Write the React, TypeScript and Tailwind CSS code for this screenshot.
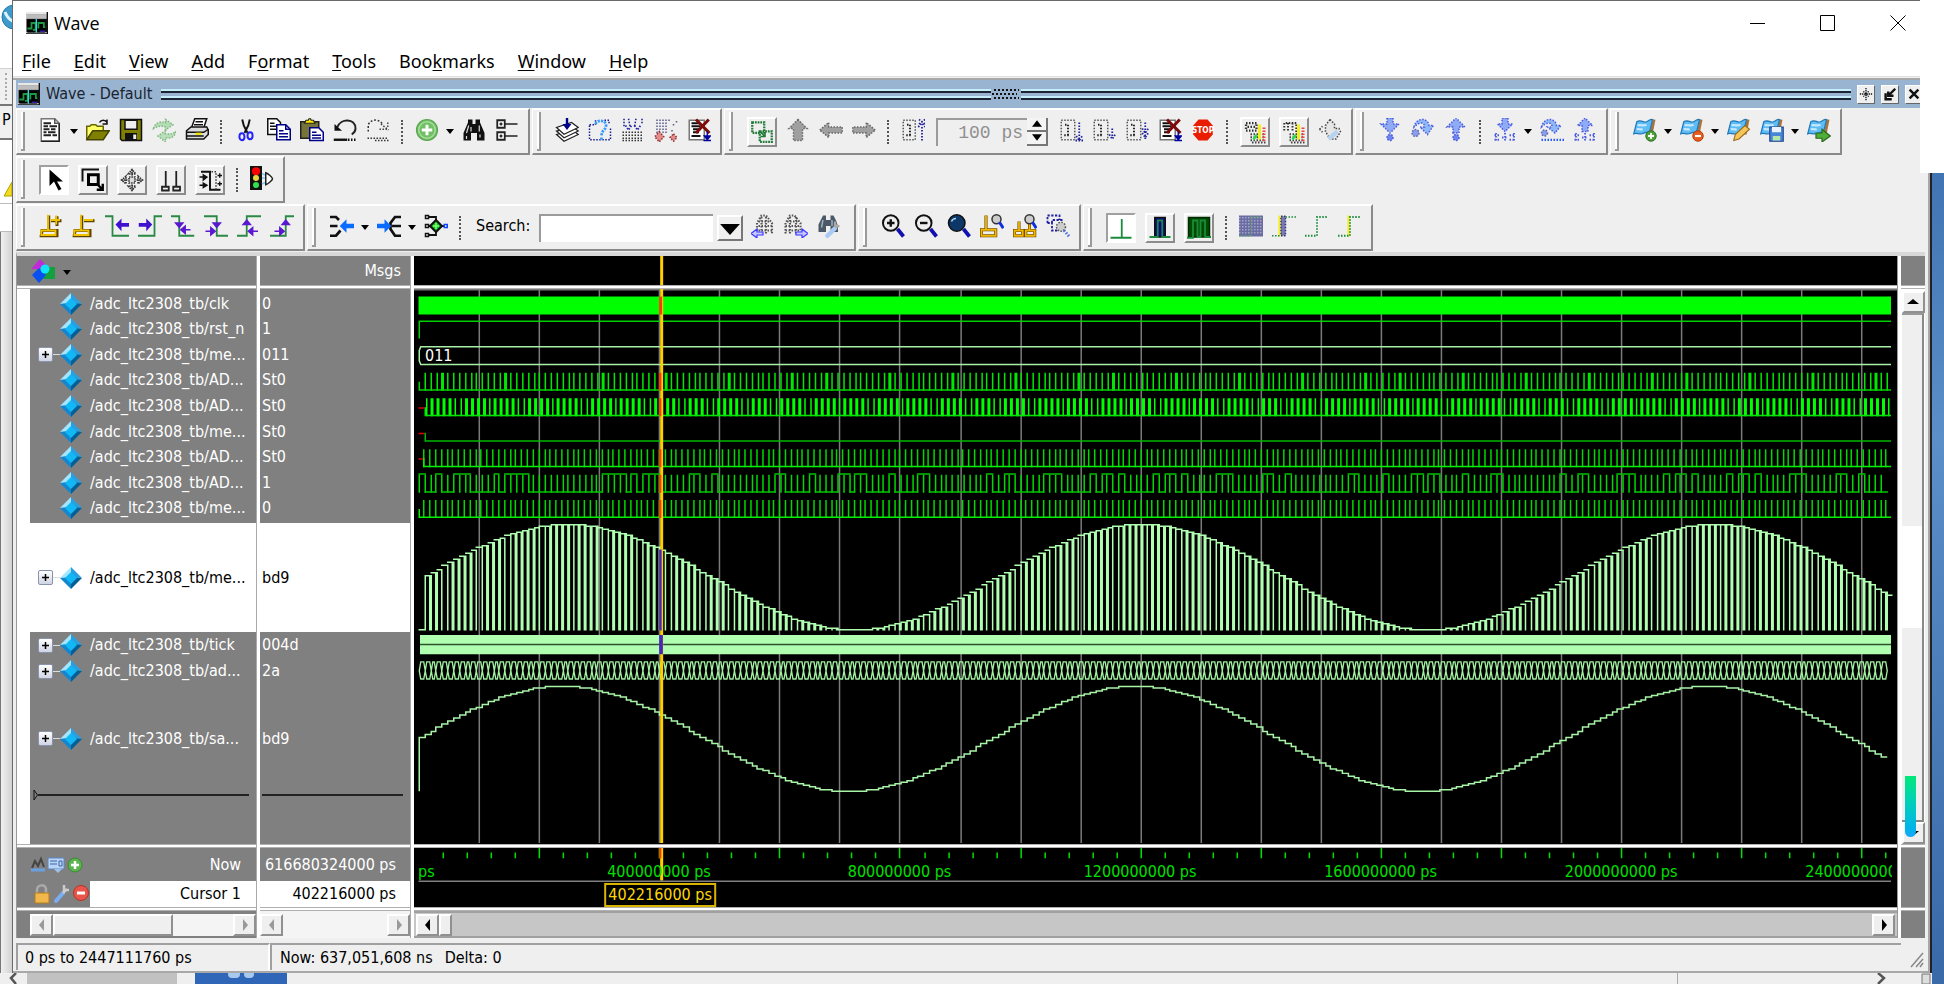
import React from 'react';

type Kids = { children?: React.ReactNode };

/* ---------- small drawing helpers ---------- */

function Svg({ children, label }: Kids & { label?: string }) {
  return (
    <svg viewBox="0 0 16 16" className="h-6 w-6 shrink-0" fill="none" aria-label={label}>
      {children}
    </svg>
  );
}

const dots = '1 1';

const icons: Record<string, React.ReactNode> = {
  doc: (
    <>
      <path d="M1.5.5h9l3 3v12h-12z" fill="#fff" stroke="#777" />
      <path d="M13.5 3.5v12h-12" stroke="#222" />
      <path d="M10.5.5v3h3" stroke="#555" />
      <path d="M3 3.500h5M3 5.500h3m1 0h5M3 7.500h4m1 0h3M3 9.500h2m1 0h5M3 11.500h5m1 0h3" stroke="#222" strokeWidth="1.200" />
    </>
  ),
  open: (
    <>
      <path d="M.5 14.5v-9h2l1-1h3l1 1h4v3" fill="#ffff66" stroke="#666600" />
      <path d="M.5 14.5l4-6h11l-4 6z" fill="#808000" stroke="#444400" />
      <path d="M9 3c1-2 4-2 5 0m0-2v3h-3" stroke="#111" />
    </>
  ),
  save: (
    <>
      <path d="M1 1h14v14H2l-1-1z" fill="#808000" stroke="#111" />
      <path d="M4 1.500h8v6H4z" fill="#eee" stroke="#111" />
      <path d="M4 10h8v5H4z" fill="#111" />
      <path d="M9.500 11h2v3h-2z" fill="#eee" />
    </>
  ),
  refresh: (
    <>
      <path d="M1 7c1-4 5-5 8-4V1l5 3.500L9 8V6C6 5 4 5.500 1 7z" fill="#b4dcb4" stroke="#7db87d" strokeDasharray={dots} />
      <path d="M16 9c-1 4-4 5-7 4v3l-5-4 5-3.500v2c3 .5 5 0 7-1.500z" fill="#b9deb9" stroke="#7db87d" strokeDasharray={dots} />
    </>
  ),
  print: (
    <>
      <path d="M4.500 6l2-5.500h8l-2 6" fill="#fff" stroke="#111" />
      <path d="M7 2.500h5M6 4.500h6" stroke="#111" />
      <path d="M1 8.500l3-2.500h10.500l1 2v3l-3 3H1z" fill="#ddd" stroke="#111" />
      <path d="M1 9.500h11.500l3-2M1 12h11.500" stroke="#111" />
      <path d="M7 10.500h4" stroke="#f3e300" strokeWidth="1.500" />
    </>
  ),
  cut: (
    <>
      <path d="M5.500 1l1 4 2.500 5M10.500 1l-1 4L7 10" stroke="#111" strokeWidth="1.300" />
      <ellipse cx="5.300" cy="12.500" rx="1.700" ry="2.300" stroke="#2222ff" strokeWidth="1.300" />
      <ellipse cx="10.700" cy="11.800" rx="1.700" ry="2.300" stroke="#2222ff" strokeWidth="1.300" />
    </>
  ),
  copy: (
    <>
      <path d="M.5.5h6l2.500 2.500v8h-8.500z" fill="#fff" stroke="#111" />
      <path d="M2 3.500h3M2 5.500h4M2 7.500h4" stroke="#111" />
      <path d="M6.500 4.500h6l3 3v7h-9z" fill="#fff" stroke="#000088" />
      <path d="M12.500 4.500v3h3M8 8.500h3M8 10.500h6M8 12.500h6" stroke="#000088" />
    </>
  ),
  paste: (
    <>
      <path d="M.5 2.500h12v11H.5z" fill="#77743a" stroke="#222" />
      <path d="M3 3.500h7l-1-2H7.500L7 .5H6l-.5 1H4z" fill="#ffe800" stroke="#222" strokeWidth=".8" />
      <path d="M6.500 6.500h6l3 3v5.500h-9z" fill="#fff" stroke="#000088" />
      <path d="M8 9.500h3M8 11.500h6M8 13.300h6" stroke="#000088" />
    </>
  ),
  undo: (
    <>
      <path d="M3 6c2-6 12-6 12 1 0 2-1 3-2.500 4" stroke="#222" strokeWidth="1.300" />
      <path d="M1 4v4.500h5z" fill="#111" />
      <path d="M.5 14.500h9" stroke="#111" strokeWidth="1.600" />
      <path d="M10 14.500h6" stroke="#111" strokeDasharray={dots} strokeWidth="1.600" />
    </>
  ),
  redo: (
    <>
      <path d="M1.500 9V4.500C3 1 8 0 11 4" stroke="#333" strokeDasharray="1.200 1.200" />
      <path d="M9 7.500h6M10 4l5 4M14.500 3v4" stroke="#444" strokeDasharray={dots} />
      <path d="M1 13.500h14M6 15h9" stroke="#333" strokeDasharray={dots} />
    </>
  ),
  add: (
    <>
      <circle cx="8" cy="8" r="7" fill="#6fbf63" stroke="#5ba552" strokeWidth=".8" />
      <circle cx="8" cy="8" r="5.500" stroke="#a7dc9e" />
      <path d="M8 4.500v7M4.500 8h7" stroke="#fff" strokeWidth="2" />
    </>
  ),
  bino: (
    <>
      <path d="M1 15V10l3-7V1h3v3h2V1h3v2l3 7v5h-5v-5H6v5z" fill="#111" />
      <path d="M4.500 5l-1.500 5M11.500 5v4M6 6v3M3 12v2M12 11v2" stroke="#ddd" strokeWidth=".8" />
    </>
  ),
  tree: (
    <>
      <path d="M1.500 1.500h5v5h-5zM1.500 9.500h5v5h-5z" fill="#fff" stroke="#222" strokeWidth="1.200" />
      <path d="M6.500 4H15M6.500 12H15M3 4h2M4 3v2M3 12h2M4 11v2" stroke="#222" />
    </>
  ),
  compile: (
    <>
      <path d="M1 11l5 4.500 9.500-4.500-4-3z" stroke="#222" strokeWidth=".8" fill="#fff" />
      <path d="M1 8.700l5 4.500 9.500-4.500-4-3z" stroke="#222" strokeWidth=".8" fill="#fff" />
      <path d="M1 6.300l5 4.500 9.500-4.500-4.500-3.300z" stroke="#222" strokeWidth=".8" fill="#fff" />
      <path d="M8 0v5" stroke="#00008b" strokeWidth="1.600" />
      <path d="M5 4h6L8 8z" fill="#00008b" />
    </>
  ),
  query: (
    <>
      <path d="M1 4.500h4v-3M11 1.500h3v3M1 5v9.500h14V6" stroke="#1a1a90" strokeDasharray={dots} />
      <path d="M5 4c1-3 7-3 7 1 0 3-3 3-3 7m0 1v2" stroke="#3a9aff" strokeWidth="1.800" strokeDasharray="1.500 .7" />
    </>
  ),
  rain: (
    <>
      <path d="M2 .5v5M5 .5l1 5M10 .5l-1 5M14 .5v4" stroke="#1a1a90" strokeDasharray={dots} />
      <path d="M3 5l2 3 2-3M9 5l2 3 2-3" stroke="#2222aa" strokeWidth="1.200" strokeDasharray={dots} />
      <path d="M1 9.500h14M1 11.500h14M1 13.500h14M1 15h14" stroke="#333" strokeDasharray={dots} />
    </>
  ),
  coverage: (
    <>
      <path d="M2 1v9M4 1v8M6 1v9M8 1v10M10 1v2M13 4v2M15 2v2M12 8v2" stroke="#5b5b8d" strokeDasharray={dots} />
      <path d="M3.500 9l3 3.500-3 3.500-3-3.500zM13 10.500l2.300 2.500-2.300 2.500-2.300-2.500z" fill="#e58a8a" stroke="#833" strokeDasharray={dots} />
    </>
  ),
  listx: (
    <>
      <path d="M1.500 1.500h10v13h-10z" fill="#fff" stroke="#777" />
      <path d="M3 3.500h5M3 5.500h6M4 7.500h5M4 9.500h4M3 12h6" stroke="#111" strokeWidth="1.200" />
      <path d="M6 1l9 9M14.500 1L6 10" stroke="#7c0a0a" strokeWidth="2" />
      <path d="M13.500 9v3M11.500 12h4l-2 2.500zM11 15h5" fill="#0000a0" stroke="#0000a0" strokeWidth=".9" />
    </>
  ),
  squares: (
    <>
      <path d="M1.500 1.500h8v7h-8z" stroke="#1e7a35" strokeWidth="1.500" strokeDasharray="1.200 .6" />
      <path d="M6.500 7.500h8v7h-8z" stroke="#1e7a35" strokeWidth="1.500" strokeDasharray="1.200 .6" />
      <path d="M7 8l3 3M10 8v3H7" stroke="#1e7a35" />
    </>
  ),
  up: <path d="M8 1l6 6h-3v8H5V7H2z" fill="#a0a0a0" stroke="#666" strokeDasharray={dots} />,
  left: <path d="M.5 8l6-5v3h9v4h-9v3z" fill="#a0a0a0" stroke="#666" strokeDasharray={dots} />,
  right: <path d="M15.500 8l-6-5v3h-9v4h9v3z" fill="#a0a0a0" stroke="#666" strokeDasharray={dots} />,
  runup: (
    <>
      <path d="M1.500 1.500h8v13h-8z" stroke="#555" strokeDasharray={dots} />
      <path d="M4 4.500h2v7M3.500 11.500h4" stroke="#222" strokeDasharray={dots} strokeWidth="1.300" />
      <path d="M14 15V6M11.500 6L14 3.500 16 6M12 1l4 3M16 1l-4 3" stroke="#22229a" strokeDasharray={dots} strokeWidth="1.200" />
    </>
  ),
  run: (
    <>
      <path d="M1.500 1.500h9v13h-9z" stroke="#555" strokeDasharray={dots} />
      <path d="M4 4.500h2v7M3.500 11.500h4" stroke="#222" strokeDasharray={dots} strokeWidth="1.300" />
      <path d="M13.500 3v11M11.500 12l2 3 2-3M11 15h5" stroke="#22229a" strokeDasharray={dots} strokeWidth="1.200" />
    </>
  ),
  runStep: (
    <>
      <path d="M1.500 1.500h9v13h-9z" stroke="#555" strokeDasharray={dots} />
      <path d="M4 4.500h2v7M3.500 11.500h4" stroke="#222" strokeDasharray={dots} strokeWidth="1.300" />
      <path d="M13.500 7v5M11.500 11l2 3 2-3" stroke="#22229a" strokeDasharray={dots} strokeWidth="1.200" />
    </>
  ),
  runAll: (
    <>
      <path d="M1.500 1.500h9v13h-9z" stroke="#555" strokeDasharray={dots} />
      <path d="M4 4.500h2v7M3.500 11.500h4" stroke="#222" strokeDasharray={dots} strokeWidth="1.300" />
      <path d="M13.500 3v11M11.500 7l2 3 2-3M11.500 10l2 3 2-3" stroke="#22229a" strokeDasharray={dots} strokeWidth="1.200" />
    </>
  ),
  stop: (
    <>
      <path d="M5 1h6l3.500 4v6L11 15H5l-3.500-4V5z" fill="#ea1c00" />
      <text x="8" y="10.200" fontSize="5.500" fontWeight="700" textAnchor="middle" fill="#fff" fontFamily="'DejaVu Sans Condensed','Liberation Sans',sans-serif">STOP</text>
    </>
  ),
  profA: (
    <>
      <path d="M2 2h7v5H2zM3 4.500h5" stroke="#333" strokeWidth="1.500" strokeDasharray={dots} />
      <path d="M5 9.500h10M5 11.500h10M5 13.500h10M6 15h9" stroke="#444" strokeWidth="1.300" strokeDasharray={dots} />
      <path d="M11 3v10" stroke="#f2ee20" strokeWidth="2" />
      <path d="M14 5v9" stroke="#e44" strokeWidth="2" strokeDasharray={dots} />
      <path d="M7 13l2-3" stroke="#2d4" strokeWidth="1.600" />
    </>
  ),
  profB: (
    <>
      <path d="M1.500 7V2h8v7M4 2v5M7 2v5" stroke="#333" strokeWidth="1.300" strokeDasharray={dots} />
      <path d="M5 9.500h10M5 11.500h10M5 13.500h10M6 15h9" stroke="#444" strokeWidth="1.300" strokeDasharray={dots} />
      <path d="M11 3v10" stroke="#f2ee20" strokeWidth="2" />
      <path d="M14 5v9" stroke="#e44" strokeWidth="2" strokeDasharray={dots} />
      <path d="M7 13l2-3" stroke="#2d4" strokeWidth="1.600" />
    </>
  ),
  hand: (
    <>
      <path d="M8 1l3 3v3h3l1 2-3 5H8L5 9V5zM1 7.500l2-2M1 7.500l2 2" stroke="#444" strokeDasharray={dots} fill="#e6e6e6" />
      <path d="M7 14l6-5" stroke="#b9d2ef" strokeWidth="3" />
    </>
  ),
  stepIn: (
    <>
      <path d="M6 0h4v4h4L8 10 2 4h4z" fill="#8fabf5" stroke="#4a5ae0" strokeDasharray={dots} />
      <circle cx="8" cy="13" r="2" fill="#6e86ee" stroke="#4a5ae0" strokeDasharray={dots} />
    </>
  ),
  stepOver: (
    <>
      <path d="M2 6c1-6 9-7 10-1h3l-4 6-5-5h3c0-4-4-3-7 0z" fill="#8fbaf7" stroke="#4a5ae0" strokeDasharray={dots} />
      <circle cx="3" cy="10" r="2.300" fill="#8a9cee" stroke="#5a6aa0" strokeDasharray={dots} />
    </>
  ),
  stepOut: (
    <>
      <path d="M6 10h4V6h4L8 0 2 6h4z" fill="#8fabf5" stroke="#4a5ae0" strokeDasharray={dots} />
      <circle cx="8" cy="13" r="2" fill="#6e86ee" stroke="#4a5ae0" strokeDasharray={dots} />
    </>
  ),
  stepInC: (
    <>
      <path d="M6 0h4v4h3L8 9 3 4h3z" fill="#8fabf5" stroke="#4a5ae0" strokeDasharray={dots} />
      <path d="M1 11.500h4M1 14.500h4M11 11.500h4M11 14.500h4M2 10v6M14 10v6M8 10v6M6 13h4" stroke="#4a5ae0" strokeWidth="1.200" strokeDasharray={dots} />
    </>
  ),
  stepOverC: (
    <>
      <path d="M1 6c1-6 9-7 10-1h3l-4 5-5-4h3c0-4-4-3-7 0z" fill="#8fbaf7" stroke="#4a5ae0" strokeDasharray={dots} />
      <circle cx="3" cy="10" r="2" fill="#8a9cee" stroke="#5a6aa0" strokeDasharray={dots} />
      <path d="M1 14.500h15" stroke="#2a5aff" strokeWidth="1.500" strokeDasharray={dots} />
    </>
  ),
  stepOutC: (
    <>
      <path d="M6 9h4V5h3L8 0 3 5h3z" fill="#8fabf5" stroke="#4a5ae0" strokeDasharray={dots} />
      <path d="M1 11.500h4M1 14.500h4M11 11.500h4M11 14.500h4M2 10v6M14 10v6M8 10v6M6 13h4" stroke="#4a5ae0" strokeWidth="1.200" strokeDasharray={dots} />
    </>
  ),
  arrow: <path d="M5 1v11l3-3 3 6 2-1-3-5h4z" fill="#000" />,
  zoomBox: (
    <>
      <path d="M1 9V1h11" stroke="#111" strokeWidth="1.300" />
      <path d="M5 4.500h6.500v6.500H5z" stroke="#000" strokeWidth="2" />
      <path d="M11 11l3.500 3.500M14.500 10.500v4h-4" stroke="#000" strokeWidth="1.600" />
    </>
  ),
  pan: (
    <path d="M8 1v4M8 11v4M1 8h4M11 8h4M5.500 4L8 1l2.500 3zM5.500 12L8 15l2.500-3zM4 5.500L1 8l3 2.500zM12 5.500L15 8l-3 2.500zM6 6h4v4H6z" fill="#ddd" stroke="#333" strokeWidth="1.100" strokeDasharray="1 .6" />
  ),
  twoCur: <path d="M4.500 2v10M2 12.500h4.500v2.500H2zM11.500 2v10M9.500 12.500H14v2.500H9.500z" stroke="#222" strokeWidth="1.200" />,
  edit: (
    <>
      <path d="M2 2.500h6v12h7" stroke="#111" strokeWidth="1.300" />
      <path d="M9 2.500h3v12" stroke="#333" strokeDasharray={dots} />
      <path d="M1 6h5M1 11.500h5M3.500 4.500L6 6 3.500 8zM3.500 10L6 11.500 3.500 13zM13 5h3M14.500 3.500v3M13 10.500h3M14.500 9v3" stroke="#111" fill="#111" strokeWidth=".9" />
    </>
  ),
  light: (
    <>
      <path d="M0 0h8v16H0z" fill="#111" />
      <circle cx="4" cy="3.500" r="2.700" fill="#f00" />
      <circle cx="4" cy="8" r="2" fill="#e8d840" />
      <circle cx="4" cy="12.700" r="2" fill="#35e050" />
      <path d="M8 5l2 1M8 8h2M8 12l2-1" stroke="#7cc8f0" />
      <path d="M10.500 4.500v8c1.500-.5 4.500-3 4.500-4s-3-3.500-4.500-4z" fill="#fff" stroke="#222" />
    </>
  ),
  curAdd: (
    <>
      <path d="M6.500 1v10M2 11h10v3.500H1.500zM8 4.500h7M12 1.500v6.500" stroke="#5c4400" strokeWidth="2" />
      <path d="M6 .5v10.500M1.500 11h9.500v3h-9.500zM8 4h6M11.500 1v6" stroke="#f2c200" strokeWidth="1.200" />
    </>
  ),
  curDel: (
    <>
      <path d="M6.500 1v10M2 11h10v3.500H1.500zM8 4.500h7" stroke="#5c4400" strokeWidth="2" />
      <path d="M6 .5v10.500M1.500 11h9.500v3h-9.500zM8 4h6" stroke="#f2c200" strokeWidth="1.200" />
    </>
  ),
  prevT: (
    <>
      <path d="M0 1.500h5v13h11" stroke="#2a8a45" strokeWidth="1.200" />
      <path d="M7 7l4-4v3h5v2.500h-5v3z" fill="#4010d0" />
    </>
  ),
  nextT: (
    <>
      <path d="M0 14.500h11v-13h5" stroke="#2a8a45" strokeWidth="1.200" />
      <path d="M9.500 7l-4-4v3H.5v2.500h5v3z" fill="#4010d0" />
    </>
  ),
  fallP: (
    <>
      <path d="M0 1.500h5.500v13h10" stroke="#2a8a45" strokeWidth="1.200" />
      <path d="M3 6h5L5.500 9zM6.500 10.500l3-2.500v5zM9 10.500h4" fill="#5a18d0" stroke="#5a18d0" strokeWidth=".9" />
    </>
  ),
  fallN: (
    <>
      <path d="M0 1.500h8.500v13h7.500" stroke="#2a8a45" strokeWidth="1.200" />
      <path d="M6 6h5L8.500 9zM7.500 11.500l-3-2.500v5zM1 11.500h4" fill="#5a18d0" stroke="#5a18d0" strokeWidth=".9" />
    </>
  ),
  riseP: (
    <>
      <path d="M0 14.500h6.500v-13H16" stroke="#2a8a45" strokeWidth="1.200" />
      <path d="M4 7h5L6.500 4zM7.500 11.500l3-2.500v5zM9 11.500h5" fill="#5a18d0" stroke="#5a18d0" strokeWidth=".9" />
    </>
  ),
  riseN: (
    <>
      <path d="M0 14.500h10.500v-13H16" stroke="#2a8a45" strokeWidth="1.200" />
      <path d="M8 7h5l-2.500-3zM9.500 11.500l-3-2.500v5zM3 11.500h4" fill="#5a18d0" stroke="#5a18d0" strokeWidth=".9" />
    </>
  ),
  drivers: (
    <>
      <path d="M0 2h4l2 2M0 8h5M0 14.500h4l3-3.500" stroke="#111" strokeWidth="1.800" />
      <path d="M16 6.500h-5V3.500L6.500 8l4.500 4.500V9.500h5z" fill="#0a6cff" />
    </>
  ),
  readers: (
    <>
      <path d="M16 2h-4l-3 4v4l3 4.500h4M16 8h-6" stroke="#111" strokeWidth="1.800" />
      <path d="M0 6.500h5V3.500L9.500 8 5 12.500V9.500H0z" fill="#0a6cff" />
    </>
  ),
  causality: (
    <>
      <path d="M2 2h6v4M2 14h6v-4M2 8h12" stroke="#111" strokeWidth="1.200" />
      <path d="M1 1h2v2H1zM1 7h2v2H1zM1 13h2v2H1z" fill="#fff" stroke="#111" />
      <path d="M8 4l4 4-4 4-4-4z" fill="#19b81f" stroke="#111" strokeWidth="1.300" />
      <path d="M8 6v4M6 8h4" stroke="#7cff7c" />
      <path d="M13.500 7h2v2h-2z" fill="#fff" stroke="#1144ff" />
    </>
  ),
  findPrev: (
    <>
      <path d="M4 13V6l3-5h3l4 5v7M7 2v11M10 2v11M5 5h8M5 8h9M5 11h9" stroke="#555" strokeWidth="1.400" strokeDasharray={dots} />
      <path d="M0 13l4-3v2h4v2H4v2z" fill="#c8c8ff" stroke="#3a3aff" strokeWidth=".8" />
    </>
  ),
  findNext: (
    <>
      <path d="M1 13V6l3-5h3l4 5v7M4 2v11M8 2v11M2 5h8M1 8h10M1 11h10" stroke="#555" strokeWidth="1.400" strokeDasharray={dots} />
      <path d="M16 13l-4-3v2H8v2h4v2z" fill="#c8c8ff" stroke="#3a3aff" strokeWidth=".8" />
    </>
  ),
  findOpt: (
    <>
      <path d="M1 12V7l2-4 1-2h2v3h3V1h2l2 4 1 4v3H9V8H6v4z" fill="#4b5866" />
      <path d="M4 4l-1 5M10 4v4" stroke="#9fb0c0" />
      <path d="M7 14.500l5-5" stroke="#a9cbf5" strokeWidth="3" strokeLinecap="round" />
      <path d="M12 9l2-2M12 5v3h3" stroke="#aaa" strokeWidth="1.500" />
    </>
  ),
  zoomIn: (
    <>
      <path d="M11 10l4 5" stroke="#1010b0" strokeWidth="2.500" />
      <circle cx="6.500" cy="6" r="5.200" fill="#eee" stroke="#111" strokeWidth="1.300" />
      <path d="M6.500 3.500v5M4 6h5" stroke="#111" strokeWidth="1.600" />
    </>
  ),
  zoomOut: (
    <>
      <path d="M11 10l4 5" stroke="#1010b0" strokeWidth="2.500" />
      <circle cx="6.500" cy="6" r="5.200" fill="#eee" stroke="#111" strokeWidth="1.300" />
      <path d="M4 6h5" stroke="#111" strokeWidth="1.600" />
    </>
  ),
  zoomFull: (
    <>
      <path d="M11 10l4 5" stroke="#1010b0" strokeWidth="2.500" />
      <circle cx="6.500" cy="6" r="5.500" fill="#0c3766" stroke="#111" />
      <path d="M3 5c.5-1.500 1.500-2 3-2" stroke="#a8d4f4" />
    </>
  ),
  zoomCur: (
    <>
      <path d="M4 1v9M1 10.500h9.500v4H1z" stroke="#5c3c00" strokeWidth="2" />
      <path d="M4 1v9M1 10.500h9.500v4H1z" stroke="#f2b800" strokeWidth="1.200" />
      <circle cx="11" cy="3.500" r="3" fill="#ccc" stroke="#333" />
      <path d="M13 5.500l2.500 4" stroke="#1030e0" strokeWidth="2" />
    </>
  ),
  zoomTwo: (
    <>
      <path d="M4 5v6M1 11h5.500v3.500H1zM11 6v5M8.500 11h6v3.500h-6z" stroke="#5c3c00" strokeWidth="2" />
      <path d="M4 5v6M1 11h5.500v3.500H1zM11 6v5M8.500 11h6v3.500h-6z" stroke="#f2b800" strokeWidth="1.200" />
      <circle cx="11" cy="3.500" r="3" fill="#ccc" stroke="#333" />
      <path d="M13 5.500l2.500 4" stroke="#1030e0" strokeWidth="2" />
    </>
  ),
  zoomArea: (
    <>
      <path d="M1 6V1h8v3M1 6h3v5h4M4 6V4h8" stroke="#2020a0" strokeWidth="1.200" strokeDasharray="1.500 1" />
      <circle cx="10" cy="8.500" r="3" fill="#ccc" stroke="#555" strokeDasharray={dots} />
      <path d="M12 11l3.500 4" stroke="#5070e0" strokeWidth="2" strokeDasharray={dots} />
    </>
  ),
  expOff: <path d="M1 14.500h14M8.500 2v12" stroke="#1c8a3c" strokeWidth="1.200" />,
  expDelta: (
    <>
      <path d="M4.500 1h7v13h-7z" fill="#0a0a80" stroke="#111" />
      <path d="M1 14h5.500V3h3v11H15" stroke="#1c8a3c" strokeWidth="1.200" />
    </>
  ),
  expEvent: (
    <>
      <path d="M1 1h14v13H1z" fill="#004d00" stroke="#002a00" />
      <path d="M0 14.500h4V3h3v11h2V3h3v11h4" stroke="#1c8a3c" strokeWidth="1.200" />
    </>
  ),
  expAll: (
    <>
      <path d="M0 1h16v14H0z" fill="#6b6ba3" />
      <path d="M0 2.500h16M0 4.500h16M0 6.500h16M0 8.500h16M0 10.500h16M0 12.500h16" stroke="#a5a5c5" strokeDasharray={dots} />
      <path d="M0 14.500h8V2h7" stroke="#5aa070" strokeDasharray={dots} />
    </>
  ),
  expCur: (
    <>
      <path d="M5 1v14" stroke="#f2ee20" strokeWidth="1.500" />
      <path d="M6 1.500h3v13H6z" stroke="#33337a" fill="#7a7ab0" strokeDasharray={dots} />
      <path d="M0 14.500h5M9 2h7" stroke="#1c8a3c" strokeDasharray={dots} />
    </>
  ),
  colAll: <path d="M0 14.500h8V2h7" stroke="#1c8a3c" strokeWidth="1.200" strokeDasharray={dots} />,
  colCur: (
    <>
      <path d="M7 1v14" stroke="#f2ee20" strokeWidth="1.500" />
      <path d="M0 14.500h8V2h7" stroke="#1c8a3c" strokeWidth="1.200" strokeDasharray={dots} />
    </>
  ),
};

const flagBase = (
  <>
    <path d="M14 1L12 11" stroke="#a8743a" strokeWidth="2" />
    <path d="M2.500 2.500c3-2 4 1 6.500 0s2.500-2 4-1.500L11 9.500c-2-.5-3 .5-5 1s-4-1-5.500 0z" fill="#5fbcf5" stroke="#1f78b8" strokeWidth=".8" />
    <path d="M3 5c2-1 3 .8 6-.5M2.500 7.500c1.500-.5 2.500.5 4 0" stroke="#c6ebff" strokeWidth="1.500" />
  </>
);
icons.flagAdd = <>{flagBase}<circle cx="12" cy="12" r="3.500" fill="#4da03a" stroke="#2d6a20" strokeWidth=".6" /><path d="M12 10v4M10 12h4" stroke="#fff" strokeWidth="1.200" /></>;
icons.flagDel = <>{flagBase}<circle cx="12" cy="12" r="3.500" fill="#ea5a1c" stroke="#a83a0a" strokeWidth=".6" /><path d="M10 12h4" stroke="#fff" strokeWidth="1.400" /></>;
icons.flagEdit = <>{flagBase}<path d="M4.500 15l1-4 6.500-6 3 2.500-7 6.500z" fill="#f5c65a" stroke="#9a6a1c" strokeWidth=".7" /></>;
icons.flagSave = <>{flagBase}<path d="M6.500 6h9v9.500h-9z" fill="#4a86d8" stroke="#1c3f8a" strokeWidth=".7" /><path d="M8 6h6v3.500H8z" fill="#eaf3ff" /><path d="M8.500 12h5v3h-5z" fill="#b5e8a8" /></>;
icons.flagGo = <>{flagBase}<path d="M6 10h4V7.500l5.500 4.500-5.500 4v-2.500H6z" fill="#4fae3a" stroke="#2a6a1c" strokeWidth=".8" /></>;

/* ---------- toolbar parts ---------- */

function Tool({ name, label }: { name: string; label: string }) {
  return (
    <button type="button" aria-label={label} className="flex w-[33px] items-center justify-center pb-1">
      <Svg>{icons[name]}</Svg>
    </button>
  );
}

function Boxed({ name, label, on }: { name: string; label: string; on?: boolean }) {
  return (
    <button type="button" aria-label={label} className="flex w-[39px] items-center justify-center">
      <span
        className={
          on
            ? 'flex h-[30px] w-[30px] items-center justify-center border-2 border-t-[#a0a0a0] border-l-[#a0a0a0] border-r-white border-b-white bg-white'
            : 'flex h-[30px] w-[30px] items-center justify-center border-2 border-t-white border-l-white border-r-[#8c8c8c] border-b-[#8c8c8c] bg-[#efefef]'
        }
      >
        <Svg>{icons[name]}</Svg>
      </span>
    </button>
  );
}

const Drop = () => (
  <button type="button" aria-label="More" className="flex w-[14px] items-center justify-center">
    <svg viewBox="0 0 8 5" className="h-[5px] w-2"><path d="M0 0h8L4 5z" fill="#000" /></svg>
  </button>
);

const Sep = () => (
  <div className="flex w-4 items-center justify-center">
    <div className="h-6 border-l-2 border-dotted border-[#555]" />
  </div>
);

function Group({ children, label }: Kids & { label: string }) {
  return (
    <div role="toolbar" aria-label={label} className="mr-[2px] mb-px flex h-[47px] border-t-2 border-l border-r-2 border-b-2 border-t-white border-l-white border-r-[#8a8a8a] border-b-[#8a8a8a] pr-[5px]">
      <div className="my-[2px] ml-1 mr-[9px] w-1 border-r-2 border-b-2 border-[#9a9a9a] bg-white" />
      <div className="flex">{children}</div>
    </div>
  );
}

function AppIcon() {
  return (
    <svg viewBox="0 0 16 16" className="h-[22px] w-[22px]" fill="none">
      <path d="M0 0h16v16H0z" fill="#111" />
      <path d="M0 0h15v2H0z" fill="#e8e8e8" />
      <path d="M0 2h15v3H0z" fill="#bdbdbd" />
      <path d="M0 2v13h15" stroke="#ccc" strokeWidth=".8" />
      <path d="M1 6h13v9H1z" fill="#000" />
      <path d="M1 12h3V8h3v5H5M9 12V8h4v3h1" stroke="#1e9a40" strokeWidth="1.300" />
      <path d="M7.500 5v10" stroke="#2fd5e8" />
      <path d="M10 14h4" stroke="#3a1fb0" />
    </svg>
  );
}

function MenuItem({ text, at }: { text: string; at: number }) {
  return (
    <button type="button" className="leading-6">
      {text.slice(0, at)}
      <span className="underline underline-offset-2">{text[at]}</span>
      {text.slice(at + 1)}
    </button>
  );
}

/* ---------- signal list ---------- */

type Sig = { name: string; value: string; bus?: boolean };
const scalars: Sig[] = [
  { name: '/adc_ltc2308_tb/clk', value: '0' },
  { name: '/adc_ltc2308_tb/rst_n', value: '1' },
  { name: '/adc_ltc2308_tb/me...', value: '011', bus: true },
  { name: '/adc_ltc2308_tb/AD...', value: 'St0' },
  { name: '/adc_ltc2308_tb/AD...', value: 'St0' },
  { name: '/adc_ltc2308_tb/me...', value: 'St0' },
  { name: '/adc_ltc2308_tb/AD...', value: 'St0' },
  { name: '/adc_ltc2308_tb/AD...', value: '1' },
  { name: '/adc_ltc2308_tb/me...', value: '0' },
];
const buses: Sig[] = [
  { name: '/adc_ltc2308_tb/tick', value: '004d', bus: true },
  { name: '/adc_ltc2308_tb/ad...', value: '2a', bus: true },
];

function SignalName({ sig }: { sig: Sig }) {
  return (
    <div className="flex flex-1 items-center whitespace-nowrap pl-2">
      <div className="flex w-[22px] items-center">
        {sig.bus && (
          <>
            <button type="button" aria-label={'Expand ' + sig.name} className="flex h-[15px] w-[15px] items-center justify-center rounded-xs border border-[#8a93ad] bg-linear-to-b from-white to-[#d0d4e4]">
              <svg viewBox="0 0 9 9" className="h-[9px] w-[9px]"><path d="M4.500 1v7M1 4.500h7" stroke="#000" strokeWidth="1.500" /></svg>
            </button>
            <span className="h-px flex-1 bg-[#ddd]" />
          </>
        )}
      </div>
      <svg viewBox="0 0 22 22" className="h-[22px] w-[22px]">
        <path d="M11 0L0 11l11-1z" fill="#a4e6ff" />
        <path d="M11 0l11 11-11-1z" fill="#2a9fe0" />
        <path d="M0 11l11 11V10z" fill="#1287cf" />
        <path d="M22 11L11 22V10z" fill="#065f94" />
        <path d="M11 5l6 6-6 6-6-6z" fill="#10b8f5" />
      </svg>
      <span className="pl-2">{sig.name}</span>
    </div>
  );
}

/* ---------- waveform geometry, in trace units ---------- */

const STEP = 3.82;
const X0 = 3;
const X1 = 984;
const COUNT = Math.floor((X1 - X0) / STEP);
const GRID = 40.06;
const steps = Array.from({ length: COUNT }, (_, n) => n);

function pulses(phase: number, width: number, top: number) {
  return steps
    .map((n) => {
      const a = Math.round(X0 + phase + n * STEP);
      const b = Math.round(X0 + phase + n * STEP + width);
      return b >= X1 ? '' : `M${a} ${top}h${b - a + 1}v12h-${b - a + 1}z`;
    })
    .join('');
}

const opening = '100100111000010111100000000000001111010';
function bit(n: number) {
  if (n < opening.length) return opening[n] === '1';
  const v = Math.round(2048 + 2047 * Math.sin((2 * Math.PI * n) / 100));
  return ((v >> 2) ^ (v >> 5)) % 3 === 1;
}

const bitVerticals = steps.map((n) => `M${Math.round(X0 + n * STEP)} 124h1v12h-1z`).join('');
const bitLevels = steps
  .map((n) => {
    const a = Math.round(X0 + n * STEP);
    const b = Math.round(X0 + (n + 1) * STEP);
    return `M${a} ${bit(n) ? 123 : 135}h${b - a + 1}v1h-${b - a + 1}z`;
  })
  .join('');

function level(n: number, mid: number) {
  return Math.round(mid - 35 * Math.sin((2 * Math.PI * (n + 0.5)) / 100));
}

let bars = 'M3 227h4v1h-4z';
let stair = 'M3.500 335.500V300.500';
let cells = '';
steps.forEach((n) => {
  const x = Math.round(X0 + 4 + n * STEP);
  const nx = Math.min(X1, Math.round(X0 + 4 + (n + 1) * STEP));
  const y = level(n, 192);
  if (x < X1) bars += `M${x} ${y}h${nx - x + 1}v1h-${nx - x + 1}z`;
  const e = Math.round(X0 + 4 + (n + 1) * STEP - 0.65);
  if (n === 0) bars += `M${x} ${y}h1v${228 - y}h-1z`;
  if (nx < X1) bars += `M${e} ${y}h${nx - e + 1}v${228 - y}h-${nx - e + 1}z`;
  const sx = Math.round(X0 + (n + 1) * STEP) + 0.5;
  stair += `V${level(n, 300) + 0.5}H${Math.min(X1, sx)}`;
  const c = Math.round(X0 + n * STEP) + 0.5;
  const d = Math.round(X0 + (n + 1) * STEP) + 0.5;
  cells += `M${c} 255L${c + 1} 249H${d - 1}L${d} 255L${d - 1} 260.500H${c + 1}Z`;
});

const gridLines = Array.from({ length: 24 }, (_, i) => `M${Math.round(X0 + (i + 1) * GRID) + 0.5} 0V370`).join('');
const ticks = Array.from({ length: 61 }, (_, i) => {
  const x = Math.round(X0 + ((i + 1) * GRID * 2) / 5) + 0.5;
  return `M${x} ${(i + 1) % 5 === 0 ? 0 : 3}V7`;
}).join('');
const labels = [400, 800, 1200, 1600, 2000, 2400];

function Waves() {
  return (
    <svg viewBox="0 0 988 370" preserveAspectRatio="none" className="block h-[554px] w-full" fill="none">
      <path d="M0 .5H988" stroke="#777" />
      <path d={gridLines} stroke="#7a7a7a" />
      <path d="M3 5H984V17H3z" fill="#0f0" />
      <path d="M3.500 33V21.500H984" stroke="#00d000" />
      <path d="M984 38.500H4.500L3.500 41v7L4.500 50.500H984" stroke="#a8f0a8" />
      <path d={pulses(4, 0.1, 56)} fill="#00e800" />
      <path d="M3.500 62V67.500H984" stroke="#00d000" />
      <path d={pulses(4.600, 0.700, 73)} fill="#0f0" />
      <path d="M7.500 79V84.500H984" stroke="#00e800" />
      <path d="M3 79.500h4M3 96.500h4M3 113.500h4" stroke="#e00000" />
      <path d="M7.500 96V101.500H984" stroke="#00b800" />
      <path d={pulses(3.300, 0, 107)} fill="#00d800" />
      <path d="M6.500 113V118.500H984" stroke="#00f000" />
      <path d={bitVerticals} fill="#00d800" />
      <path d={bitLevels} fill="#00c400" />
      <path d={pulses(3.300, 0, 141)} fill="#00d800" />
      <path d="M3.500 147V152.500H984" stroke="#00f000" />
      <path d={bars} fill="#b0ffb0" />
      <path d="M4 231H984V244H4z" fill="#b0ffb0" />
      <path d="M4 237.500H984" stroke="#2f4f2f" />
      <path d={cells} stroke="#a0f0a0" strokeWidth=".9" />
      <path d={stair} stroke="#a8f5a8" />
      <path d="M164 0h2v370h-2z" fill="#ffd000" />
      <path d="M163.300 5h2v12h-2zM163.300 56h1.500v12h-1.500zM163.300 73h1.500v12h-1.500zM163.300 107h1.500v12h-1.500zM163.300 124h1.500v12h-1.500zM163.300 141h1.500v12h-1.500z" fill="#ff3a00" />
      <path d="M163.300 174h1.700v54h-1.700zM163.300 231h2.500v13h-2.500z" fill="#4a26b8" />
    </svg>
  );
}

/* ---------- scroll bar parts ---------- */

function ScrollBtn({ dir, dim }: { dir: 'left' | 'right' | 'up' | 'down'; dim?: boolean }) {
  const d = { left: 'M8 0v12L3 6z', right: 'M4 0v12l5-6z', up: 'M0 8h12L6 3z', down: 'M0 4h12L6 9z' }[dir];
  return (
    <button type="button" aria-label={'Scroll ' + dir} className="flex h-[22px] w-[23px] shrink-0 items-center justify-center border-2 border-t-white border-l-white border-r-[#909090] border-b-[#909090] bg-[#efefef]">
      <svg viewBox="0 0 12 12" className="h-3 w-3"><path d={d} fill={dim ? '#999' : '#000'} /></svg>
    </button>
  );
}

const Gap = () => <div className="h-[4px] shrink-0 border-t border-b border-[#b0b0b0] bg-white" />;

export default function App() {
  return (
    <div className="relative flex min-h-screen flex-col overflow-hidden bg-[#e8e8e8] font-['DejaVu_Sans_Condensed','DejaVu_Sans','Noto_Sans',sans-serif] text-[16px] leading-5 text-black">
      <div className="flex flex-1">
        {/* window behind, left edge */}
        <div className="flex w-3 shrink-0 flex-col overflow-hidden bg-[#f0f0f0]">
          <svg viewBox="0 0 12 68" className="h-[68px] w-3">
            <path d="M0 0h12v68H0z" fill="#fff" />
            <circle cx="14" cy="17" r="12" fill="#3d9bcb" stroke="#2377a8" />
            <path d="M5 12c2 5 5 8 8 9" stroke="#dff3ff" strokeWidth="3" fill="none" />
          </svg>
          <div className="flex h-[36px] justify-center border-t border-[#d0d0d0] py-1"><div className="border-l-2 border-dotted border-[#aaa]" /></div>
          <div className="h-[36px] border-t-2 border-b-2 border-[#777] pl-[2px] pt-1">P</div>
          <div className="flex h-[64px] items-end border-b border-[#bbb] bg-white pb-1">
            <svg viewBox="0 0 12 18" className="h-[18px] w-3"><path d="M4 15L12 1v14z" fill="#f2dc1c" stroke="#b0a000" /></svg>
          </div>
          <div className="h-7 border-b border-[#bbb] bg-white" />
          <div className="flex-1 border-l border-[#777] bg-linear-to-r from-[#f0f0f0] to-[#d2d2d2]" />
        </div>

        {/* main window */}
        <div className="flex min-w-0 flex-1 flex-col border-t border-l border-[#6a6a6a] bg-[#efefef]">
          <header className="flex h-[44px] items-center bg-white pl-[13px]">
            <AppIcon />
            <h1 className="flex-1 pl-[6px] font-['Open_Sans','Noto_Sans',sans-serif] text-[18px] leading-6">Wave</h1>
            <div className="flex items-center gap-[54px] pr-[24px]">
              <button type="button" aria-label="Minimize" className="h-4 w-4"><svg viewBox="0 0 16 16"><path d="M0 8.500h15" stroke="#000" /></svg></button>
              <button type="button" aria-label="Maximize" className="h-4 w-4"><svg viewBox="0 0 16 16"><path d="M.5.5h14v15H.5z" fill="none" stroke="#000" /></svg></button>
              <button type="button" aria-label="Close" className="h-4 w-4"><svg viewBox="0 0 16 16"><path d="M.5.5l15 15M15.500.5l-15 15" stroke="#000" /></svg></button>
            </div>
          </header>
          <nav className="flex h-[32px] items-center gap-[23px] border-b border-[#e0e0e0] bg-white pl-[9px] font-['Noto_Sans',sans-serif] text-[18px]">
            <MenuItem text="File" at={0} />
            <MenuItem text="Edit" at={0} />
            <MenuItem text="View" at={0} />
            <MenuItem text="Add" at={0} />
            <MenuItem text="Format" at={1} />
            <MenuItem text="Tools" at={0} />
            <MenuItem text="Bookmarks" at={3} />
            <MenuItem text="Window" at={0} />
            <MenuItem text="Help" at={0} />
          </nav>

          <div className="mt-px flex flex-1 flex-col border-t-2 border-r-2 border-b-2 border-[#a8a8a8] pl-[3px] pr-[3px]">
            <div className="flex h-[28px] items-center bg-[#99b4d1] pl-[2px] pr-[2px]">
              <AppIcon />
              <h2 className="pl-[6px] pr-[9px] text-[#1a2430]">Wave - Default</h2>
              <div className="flex h-[11px] flex-1 flex-col justify-between">
                <div className="h-[4px] border-t-2 border-b-2 border-t-[#c4ecfa] border-b-[#1b2430]" />
                <div className="h-[4px] border-t-2 border-b-2 border-t-[#c4ecfa] border-b-[#1b2430]" />
              </div>
              <svg viewBox="0 0 30 12" className="h-3 w-[30px]"><path d="M3 2h25M1 6h25M3 10h25" stroke="#111" strokeWidth="2" strokeDasharray="2 2" /></svg>
              <div className="flex h-[11px] flex-1 flex-col justify-between">
                <div className="h-[4px] border-t-2 border-b-2 border-t-[#c4ecfa] border-b-[#1b2430]" />
                <div className="h-[4px] border-t-2 border-b-2 border-t-[#c4ecfa] border-b-[#1b2430]" />
              </div>
              <div className="flex gap-[6px] pl-[6px]">
                {[
                  ['Zoom pane', 'M8 1v14M1 8h14M5 5l6 6M11 5l-6 6'],
                  ['Undock', 'M14 2L6 10M6 5v5h6M3 7v7h7'],
                  ['Close pane', 'M3 3l10 10M13 3L3 13'],
                ].map(([label, d], i) => (
                  <button key={label} type="button" aria-label={label} className="flex h-[19px] w-[18px] items-center justify-center border border-t-white border-l-white border-r-[#666] border-b-[#666] bg-[#efefef]">
                    <svg viewBox="0 0 16 16" className="h-[14px] w-[14px]" fill="none"><path d={d} stroke="#111" strokeWidth={i === 0 ? 1.5 : 2.8} strokeDasharray={i === 0 ? '1.500 1' : undefined} /></svg>
                  </button>
                ))}
              </div>
            </div>

            <div className="flex">
              <Group label="Standard">
                <Tool name="doc" label="New" /><Drop /><Tool name="open" label="Open" /><Tool name="save" label="Save" /><Tool name="refresh" label="Reload" /><Tool name="print" label="Print" /><Sep />
                <Tool name="cut" label="Cut" /><Tool name="copy" label="Copy" /><Tool name="paste" label="Paste" /><Tool name="undo" label="Undo" /><Tool name="redo" label="Redo" /><Sep />
                <Tool name="add" label="Add" /><Drop /><Tool name="bino" label="Find" /><Tool name="tree" label="Expand all" />
              </Group>
              <Group label="Compile">
                <Tool name="compile" label="Compile" /><Tool name="query" label="Compile out of date" /><Tool name="rain" label="Compile all" /><Tool name="coverage" label="Simulate" /><Tool name="listx" label="Break" />
              </Group>
              <Group label="Simulate">
                <Boxed name="squares" label="Environment" /><Tool name="up" label="Up" /><Tool name="left" label="Back" /><Tool name="right" label="Forward" /><Sep /><Tool name="runup" label="Restart" />
                <div className="flex items-center pl-[7px] pr-[6px]">
                  <input aria-label="Run length" defaultValue="100 ps" className="h-[28px] w-[91px] border-t-2 border-l-2 border-[#9a9a9a] bg-[#efefef] pr-1 text-right font-['Liberation_Mono',monospace] text-[18px] text-[#8f8f8f]" />
                  <div className="flex h-[28px] w-[21px] flex-col">
                    {['M0 6h9L4.500 0z', 'M0 0h9L4.500 6z'].map((d) => (
                      <button key={d} type="button" aria-label="Change run length" className="flex flex-1 items-center justify-center border-r-2 border-b-2 border-[#777] bg-[#f4f4f4]">
                        <svg viewBox="0 0 9 6" className="h-[7px] w-[10px]"><path d={d} fill="#000" /></svg>
                      </button>
                    ))}
                  </div>
                </div>
                <Tool name="run" label="Run" /><Tool name="runStep" label="Continue run" /><Tool name="runAll" label="Run all" /><Tool name="listx" label="Break run" /><Tool name="stop" label="Stop" /><Sep />
                <Boxed name="profA" label="Performance profiling" /><Boxed name="profB" label="Memory profiling" /><Tool name="hand" label="Edit profile" />
              </Group>
              <Group label="Step">
                <Tool name="stepIn" label="Step into" /><Tool name="stepOver" label="Step over" /><Tool name="stepOut" label="Step out" /><Sep /><Tool name="stepInC" label="Step into current" /><Drop /><Tool name="stepOverC" label="Step over current" /><Tool name="stepOutC" label="Step out current" />
              </Group>
              <Group label="Bookmarks">
                <Tool name="flagAdd" label="Add bookmark" /><Drop /><Tool name="flagDel" label="Delete bookmark" /><Drop /><Tool name="flagEdit" label="Manage bookmarks" /><Tool name="flagSave" label="Save bookmarks" /><Drop /><Tool name="flagGo" label="Go to bookmark" />
              </Group>
            </div>

            <div className="flex">
              <Group label="Wave mode">
                <Boxed on name="arrow" label="Select" /><Boxed name="zoomBox" label="Zoom mode" /><Boxed name="pan" label="Pan" /><Boxed name="twoCur" label="Two cursors" /><Boxed name="edit" label="Edit mode" /><Sep /><Tool name="light" label="Stop drawing" />
              </Group>
            </div>

            <div className="flex">
              <Group label="Wave cursor">
                <Tool name="curAdd" label="Insert cursor" /><Tool name="curDel" label="Delete cursor" /><Tool name="prevT" label="Previous transition" /><Tool name="nextT" label="Next transition" /><Tool name="fallP" label="Previous falling" /><Tool name="fallN" label="Next falling" /><Tool name="riseP" label="Previous rising" /><Tool name="riseN" label="Next rising" />
              </Group>
              <Group label="Wave search">
                <Tool name="drivers" label="Drivers" /><Drop /><Tool name="readers" label="Readers" /><Drop /><Tool name="causality" label="Causality" /><Sep />
                <label htmlFor="search" className="flex items-center pl-2 pr-[9px] pb-1">Search:</label>
                <div className="flex items-center">
                  <input id="search" className="h-[28px] w-[174px] border-t-2 border-l-2 border-t-[#9a9a9a] border-l-[#9a9a9a] bg-white px-1" />
                  <button type="button" aria-label="Search history" className="ml-1 mr-[3px] flex h-[26px] w-[26px] items-center justify-center border-2 border-t-white border-l-white border-r-[#777] border-b-[#777] bg-[#efefef]">
                    <svg viewBox="0 0 18 10" className="mt-1 h-[11px] w-5"><path d="M0 0h18L9 10z" fill="#000" /></svg>
                  </button>
                </div>
                <div className="flex pr-1">
                  <Tool name="findPrev" label="Find previous" /><Tool name="findNext" label="Find next" /><Tool name="findOpt" label="Search options" />
                </div>
              </Group>
              <Group label="Wave zoom">
                <Tool name="zoomIn" label="Zoom in" /><Tool name="zoomOut" label="Zoom out" /><Tool name="zoomFull" label="Zoom full" /><Tool name="zoomCur" label="Zoom on cursor" /><Tool name="zoomTwo" label="Zoom between cursors" /><Tool name="zoomArea" label="Zoom other" />
              </Group>
              <Group label="Wave expand">
                <Boxed on name="expOff" label="Expanded time off" /><Boxed name="expDelta" label="Deltas mode" /><Boxed name="expEvent" label="Events mode" /><Sep /><Tool name="expAll" label="Expand all time" /><Tool name="expCur" label="Expand at cursor" /><Tool name="colAll" label="Collapse all time" /><Tool name="colCur" label="Collapse at cursor" />
              </Group>
            </div>

            {/* wave panes */}
            <main className="flex flex-1 border-t-4 border-l border-t-[#d8d8d8] border-l-[#999] text-white">
              <section aria-label="Signals" className="flex w-[239px] shrink-0 flex-col">
                <div className="flex h-[29px] shrink-0 items-center bg-[#808080] pl-[15px]">
                  <svg viewBox="0 0 24 24" className="h-6 w-6">
                    <path d="M0 9L8 0l7 7-3 3H0z" fill="#c02ad8" />
                    <path d="M12 8h11v12H10z" fill="#14a03c" />
                    <path d="M7 9l7 7-7 8-7-8z" fill="#0a50f0" />
                    <circle cx="13" cy="10" r="4.500" fill="#12e4fa" />
                  </svg>
                  <span className="pt-1 pl-1"><Drop /></span>
                </div>
                <Gap />
                <div className="flex flex-1 flex-col bg-white pl-[13px]">
                  <div className="flex h-[234px] flex-col bg-[#808080] py-[2px]">
                    {scalars.map((s, i) => <SignalName key={i} sig={s} />)}
                  </div>
                  <div className="flex h-[109px] flex-col bg-white text-black">
                    <SignalName sig={{ name: '/adc_ltc2308_tb/me...', value: 'bd9', bus: true }} />
                  </div>
                  <div className="flex flex-1 flex-col bg-[#808080]">
                    <div className="flex h-[52px] flex-col">{buses.map((s) => <SignalName key={s.name} sig={s} />)}</div>
                    <div className="flex h-[105px] flex-col pt-1"><SignalName sig={{ name: '/adc_ltc2308_tb/sa...', value: 'bd9', bus: true }} /></div>
                    <div className="flex items-center pl-[3px] pr-[7px]">
                      <svg viewBox="0 0 5 12" className="h-3 w-[5px]" fill="none"><path d="M1 1v10l3.500-5z" stroke="#111" /></svg>
                      <div className="h-[2px] flex-1 bg-[#222]" />
                    </div>
                  </div>
                </div>
                <Gap />
                <div className="flex h-[33px] shrink-0 items-center bg-[#808080] pl-[13px] pr-[15px]">
                  <svg viewBox="0 0 54 20" className="h-5 w-[54px]" fill="none">
                    <path d="M2 13l3-7 3 5 3-7 3 8" stroke="#444" strokeWidth="2" /><path d="M1 15h14" stroke="#6aa0e0" strokeWidth="3" />
                    <path d="M18 3h16v11H18z" fill="#b9d4f4" stroke="#5a86c0" /><path d="M20 6h7M20 9h7M29 6h3v5h-3z" stroke="#3a62a8" /><path d="M24 14h8l-4 4z" fill="#9fc0ea" />
                    <circle cx="45" cy="10" r="7" fill="#5db350" stroke="#3b8a30" /><path d="M45 6v8M41 10h8" stroke="#fff" strokeWidth="2.500" />
                  </svg>
                  <span className="flex-1 text-right">Now</span>
                </div>
                <div className="flex h-[26px] shrink-0 bg-[#808080]">
                  <svg viewBox="0 0 73 26" className="h-[26px] w-[73px]" fill="none">
                    <path d="M20 12V9c0-6 9-6 9-1v4" stroke="#aaa" strokeWidth="2.500" /><path d="M18 12h14v10H18z" fill="#f0b84a" stroke="#b87c1c" />
                    <path d="M39 20l7-8" stroke="#7aaef0" strokeWidth="4" strokeLinecap="round" /><path d="M46 12l4-4M47 4v5h5" stroke="#ccc" strokeWidth="2.500" />
                    <circle cx="64" cy="12" r="7.500" fill="#e8554a" stroke="#b83226" /><path d="M60 12h8" stroke="#fff" strokeWidth="3" />
                  </svg>
                  <div className="flex flex-1 items-center justify-end bg-white pr-[15px] text-black">Cursor 1</div>
                </div>
                <Gap />
                <div className="flex h-[27px] shrink-0 items-center bg-[#808080] pl-[13px]">
                  <div className="flex flex-1 bg-[#f4f4f4]">
                    <ScrollBtn dir="left" dim />
                    <div className="h-[22px] w-[120px] border-2 border-t-white border-l-white border-r-[#909090] border-b-[#909090] bg-[#efefef]" />
                    <div className="flex-1" />
                    <ScrollBtn dir="right" dim />
                  </div>
                </div>
              </section>

              <div className="w-1 shrink-0 border-l border-[#aaa] bg-white" />

              <section aria-label="Values" className="flex w-[150px] shrink-0 flex-col">
                <div className="flex h-[29px] shrink-0 items-center justify-end bg-[#808080] pr-[9px]">Msgs</div>
                <Gap />
                <div className="flex flex-1 flex-col bg-[#808080]">
                  <div className="flex h-[234px] flex-col py-[2px]">
                    {scalars.map((s, i) => <div key={i} className="flex flex-1 items-center pl-[2px]">{s.value}</div>)}
                  </div>
                  <div className="flex h-[109px] items-center bg-white pl-[2px] text-black">bd9</div>
                  <div className="flex h-[52px] flex-col">{buses.map((s) => <div key={s.name} className="flex flex-1 items-center pl-[2px]">{s.value}</div>)}</div>
                  <div className="flex h-[105px] items-center pt-1 pl-[2px]">bd9</div>
                  <div className="mt-[5px] mr-[7px] ml-[2px] h-[2px] bg-[#222]" />
                </div>
                <Gap />
                <div className="flex h-[33px] shrink-0 items-center justify-end bg-[#808080] pr-[14px]">616680324000 ps</div>
                <div className="flex h-[26px] shrink-0 items-center justify-end bg-white pr-[14px] text-black">402216000 ps</div>
                <Gap />
                <div className="flex h-[27px] shrink-0 items-center justify-between bg-[#f4f4f4]">
                  <ScrollBtn dir="left" dim /><ScrollBtn dir="right" dim />
                </div>
              </section>

              <div className="w-1 shrink-0 border-l border-[#aaa] bg-white" />

              <section aria-label="Waveforms" className="flex min-w-0 flex-1 flex-col bg-black">
                <svg viewBox="0 0 988 20" preserveAspectRatio="none" className="block h-[29px] w-full shrink-0"><path d="M164 0h2v20h-2z" fill="#ffd000" /></svg>
                <Gap />
                <div className="relative flex-1">
                  <Waves />
                  <span className="absolute top-[57px] left-[11px]">011</span>
                </div>
                <Gap />
                <div className="relative h-[59px] shrink-0 overflow-hidden text-[#00e000]">
                  <svg viewBox="0 0 988 40" preserveAspectRatio="none" className="block h-[59px] w-full" fill="none">
                    <path d={ticks} stroke="#00e000" />
                    <path d="M3 22.500H984" stroke="#808080" />
                    <path d="M164 0h2v22h-2z" fill="#ffd000" />
                    <path d="M163.300 0h1.500v7h-1.500z" fill="#ff3a00" />
                  </svg>
                  <span className="absolute top-[14px] left-1">ps</span>
                  {labels.map((m) => (
                    <span
                      key={m}
                      className="absolute top-[14px] -translate-x-1/2 whitespace-nowrap"
                      style={{ left: `${((X0 + (m / 100) * GRID) / 988) * 100}%` }}
                    >
                      {m}000000 ps
                    </span>
                  ))}
                  <span className="absolute right-0 top-0 h-[32px] w-[5px] bg-black" />
                  <span className="absolute top-[35px] -translate-x-1/2 whitespace-nowrap border-2 border-[#d8b400] bg-black px-[2px] leading-5 text-[#ffd800]" style={{ left: '16.6%' }}>402216000 ps</span>
                </div>
                <Gap />
                <div className="flex h-[27px] shrink-0 items-center justify-between border-y-2 border-[#a0a0a0] bg-[#c6c6c6] px-[2px]">
                  <div className="flex">
                    <ScrollBtn dir="left" />
                    <div className="h-[22px] w-[13px] border-2 border-t-white border-l-white border-r-[#909090] border-b-[#909090] bg-[#efefef]" />
                  </div>
                  <ScrollBtn dir="right" />
                </div>
              </section>

              <div className="w-1 shrink-0 border-l border-[#999] bg-white" />

              <div className="flex w-[24px] shrink-0 flex-col">
                <div className="h-[29px] shrink-0 bg-[#808080]" />
                <Gap />
                <div className="relative flex flex-1 flex-col items-center bg-white pt-[2px]">
                  <ScrollBtn dir="up" />
                  <div className="h-[213px] w-[22px] border-r-2 border-t-2 border-t-[#999] border-r-[#888] bg-[#efefef]" />
                  <div className="h-[102px] w-[22px] border-r-2 border-[#888] bg-white" />
                  <div className="w-[22px] flex-1 border-r-2 border-b-2 border-[#888] bg-[#efefef]" />
                  <ScrollBtn dir="down" />
                  <div className="absolute bottom-[7px] left-1 h-[61px] w-[11px] rounded-b-full bg-linear-to-b from-[#00e878] to-[#16a8f8]" />
                </div>
                <Gap />
                <div className="h-[59px] shrink-0 bg-[#808080]" />
                <Gap />
                <div className="h-[27px] shrink-0 bg-[#808080]" />
              </div>
            </main>

            <footer className="mt-1 flex h-[29px] shrink-0 items-center">
              <div className="flex h-[27px] w-[254px] items-center border-t-2 border-l-2 border-r-2 border-[#a0a0a0] border-r-white pl-[7px]">0 ps to 2447111760 ps</div>
              <div className="flex h-[27px] flex-1 items-center gap-3 border-t-2 border-l-2 border-[#a0a0a0] pl-2"><span>Now: 637,051,608 ns</span><span>Delta: 0</span></div>
              <svg viewBox="0 0 24 24" className="h-6 w-6"><path d="M10 22L22 8M15 22l7-8M19 22l3-4" stroke="#888" strokeWidth="1.500" /></svg>
            </footer>
          </div>
        </div>

        <div className="w-[14px] shrink-0 border-l-2 border-[#222] bg-linear-to-b from-[#2f62a4] via-[#5b8fc8] via-45% to-[#3a6aa8]" />
      </div>

      {/* window behind, bottom edge */}
      <div className="flex h-[11px] shrink-0 items-start overflow-hidden bg-[#efefef]">
        <svg viewBox="0 0 27 11" className="h-[11px] w-[27px]" fill="none"><path d="M16 0l-5 5 5 6" stroke="#555" strokeWidth="2.500" /></svg>
        <div className="h-full w-[150px] bg-[#c1c1c1]" />
        <div className="h-full w-[18px]" />
        <div className="flex h-full w-[92px] justify-center gap-1 bg-[#2f66b8]">
          <div className="h-[5px] w-3 rounded-b-sm bg-[#a8c8ee]" /><div className="h-[5px] w-[10px] rounded-b-sm bg-[#a8c8ee]" />
        </div>
        <div className="h-full flex-1 border-r border-[#aaa]" />
        <svg viewBox="0 0 254 11" className="h-[11px] w-[254px]" fill="none">
          <path d="M200 0l6 5-6 6" stroke="#555" strokeWidth="2.500" />
          <path d="M244 1h8v10h-8z" fill="#ddd" stroke="#777" />
        </svg>
        <div className="h-full w-[12px] bg-[#3a6aa8]" />
      </div>

      <div className="absolute top-0 right-0 h-[173px] w-6 bg-white" />
    </div>
  );
}
